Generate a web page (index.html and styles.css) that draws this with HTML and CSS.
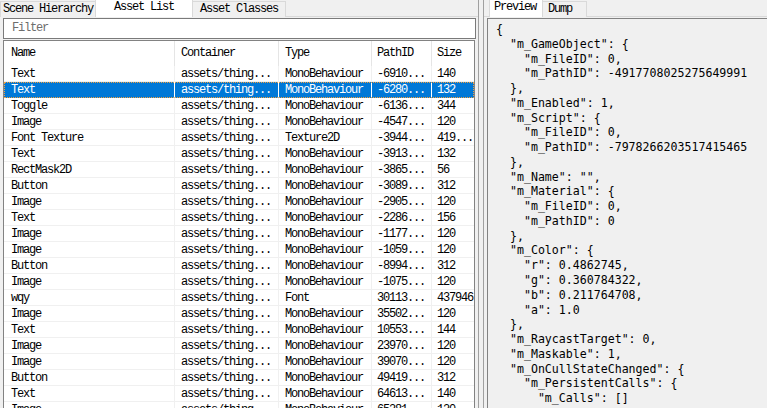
FILE: index.html
```html
<!DOCTYPE html>
<html>
<head>
<meta charset="utf-8">
<link rel="stylesheet" href="styles.css">
</head>
<body>
<div class="app">
  <div class="left">
    <div class="tabs">
      <div class="tab t1">Scene Hierarchy</div>
      <div class="tab t2 active">Asset List</div>
      <div class="tab t3">Asset Classes</div>
    </div>
    <div class="page">
      <div class="filter">Filter</div>
      <div class="list">
        <div class="row head">
          <div class="c c1">Name</div><div class="c c2">Container</div><div class="c c3">Type</div><div class="c c4">PathID</div><div class="c c5">Size</div>
        </div>
        <div class="row"><div class="c c1">Text</div><div class="c c2">assets/thing...</div><div class="c c3">MonoBehaviour</div><div class="c c4">-6910...</div><div class="c c5">140</div></div>
        <div class="row sel"><div class="c c1">Text</div><div class="c c2">assets/thing...</div><div class="c c3">MonoBehaviour</div><div class="c c4">-6280...</div><div class="c c5">132</div></div>
        <div class="row"><div class="c c1">Toggle</div><div class="c c2">assets/thing...</div><div class="c c3">MonoBehaviour</div><div class="c c4">-6136...</div><div class="c c5">344</div></div>
        <div class="row"><div class="c c1">Image</div><div class="c c2">assets/thing...</div><div class="c c3">MonoBehaviour</div><div class="c c4">-4547...</div><div class="c c5">120</div></div>
        <div class="row"><div class="c c1">Font Texture</div><div class="c c2">assets/thing...</div><div class="c c3">Texture2D</div><div class="c c4">-3944...</div><div class="c c5">419...</div></div>
        <div class="row"><div class="c c1">Text</div><div class="c c2">assets/thing...</div><div class="c c3">MonoBehaviour</div><div class="c c4">-3913...</div><div class="c c5">132</div></div>
        <div class="row"><div class="c c1">RectMask2D</div><div class="c c2">assets/thing...</div><div class="c c3">MonoBehaviour</div><div class="c c4">-3865...</div><div class="c c5">56</div></div>
        <div class="row"><div class="c c1">Button</div><div class="c c2">assets/thing...</div><div class="c c3">MonoBehaviour</div><div class="c c4">-3089...</div><div class="c c5">312</div></div>
        <div class="row"><div class="c c1">Image</div><div class="c c2">assets/thing...</div><div class="c c3">MonoBehaviour</div><div class="c c4">-2905...</div><div class="c c5">120</div></div>
        <div class="row"><div class="c c1">Text</div><div class="c c2">assets/thing...</div><div class="c c3">MonoBehaviour</div><div class="c c4">-2286...</div><div class="c c5">156</div></div>
        <div class="row"><div class="c c1">Image</div><div class="c c2">assets/thing...</div><div class="c c3">MonoBehaviour</div><div class="c c4">-1177...</div><div class="c c5">120</div></div>
        <div class="row"><div class="c c1">Image</div><div class="c c2">assets/thing...</div><div class="c c3">MonoBehaviour</div><div class="c c4">-1059...</div><div class="c c5">120</div></div>
        <div class="row"><div class="c c1">Button</div><div class="c c2">assets/thing...</div><div class="c c3">MonoBehaviour</div><div class="c c4">-8994...</div><div class="c c5">312</div></div>
        <div class="row"><div class="c c1">Image</div><div class="c c2">assets/thing...</div><div class="c c3">MonoBehaviour</div><div class="c c4">-1075...</div><div class="c c5">120</div></div>
        <div class="row"><div class="c c1">wqy</div><div class="c c2">assets/thing...</div><div class="c c3">Font</div><div class="c c4">30113...</div><div class="c c5">437946</div></div>
        <div class="row"><div class="c c1">Image</div><div class="c c2">assets/thing...</div><div class="c c3">MonoBehaviour</div><div class="c c4">35502...</div><div class="c c5">120</div></div>
        <div class="row"><div class="c c1">Text</div><div class="c c2">assets/thing...</div><div class="c c3">MonoBehaviour</div><div class="c c4">10553...</div><div class="c c5">144</div></div>
        <div class="row"><div class="c c1">Image</div><div class="c c2">assets/thing...</div><div class="c c3">MonoBehaviour</div><div class="c c4">23970...</div><div class="c c5">120</div></div>
        <div class="row"><div class="c c1">Image</div><div class="c c2">assets/thing...</div><div class="c c3">MonoBehaviour</div><div class="c c4">39070...</div><div class="c c5">120</div></div>
        <div class="row"><div class="c c1">Button</div><div class="c c2">assets/thing...</div><div class="c c3">MonoBehaviour</div><div class="c c4">49419...</div><div class="c c5">312</div></div>
        <div class="row"><div class="c c1">Text</div><div class="c c2">assets/thing...</div><div class="c c3">MonoBehaviour</div><div class="c c4">64613...</div><div class="c c5">140</div></div>
        <div class="row"><div class="c c1">Image</div><div class="c c2">assets/thing...</div><div class="c c3">MonoBehaviour</div><div class="c c4">65281...</div><div class="c c5">120</div></div>
      </div>
    </div>
  </div>
  <div class="splitter"></div>
  <div class="right">
    <div class="tabs rtabs">
      <div class="tab r1 active">Preview</div>
      <div class="tab r2">Dump</div>
    </div>
    <div class="preview">
<pre class="json">{
  "m_GameObject": {
    "m_FileID": 0,
    "m_PathID": -4917708025275649991
  },
  "m_Enabled": 1,
  "m_Script": {
    "m_FileID": 0,
    "m_PathID": -7978266203517415465
  },
  "m_Name": "",
  "m_Material": {
    "m_FileID": 0,
    "m_PathID": 0
  },
  "m_Color": {
    "r": 0.4862745,
    "g": 0.360784322,
    "b": 0.211764708,
    "a": 1.0
  },
  "m_RaycastTarget": 0,
  "m_Maskable": 1,
  "m_OnCullStateChanged": {
    "m_PersistentCalls": {
      "m_Calls": []
    }
  }
}</pre>
    </div>
  </div>
</div>
</body>
</html>
```

FILE: styles.css
```css
html, body {
  margin: 0;
  padding: 0;
  background: #f0f0f0;
}
body {
  width: 767px;
  height: 408px;
  overflow: hidden;
  font-family: "Liberation Mono", monospace;
  font-size: 12px;
  letter-spacing: -1.2px;
  color: #000;
}
.app {
  display: flex;
  height: 408px;
}
.left {
  width: 478px;
  flex: none;
  display: flex;
  flex-direction: column;
  border-right: 1px solid #a0a0a0;
  overflow: hidden;
}
.splitter {
  width: 4px;
  flex: none;
}
.right {
  flex: 1;
  display: flex;
  flex-direction: column;
  border-left: 1px solid #a0a0a0;
  overflow: hidden;
}
.tabs {
  display: flex;
  height: 17px;
  flex: none;
  align-items: flex-end;
  border-bottom: 1px solid #d9d9d9;
  box-sizing: border-box;
}
.tab {
  box-sizing: border-box;
  border: 1px solid #d9d9d9;
  border-bottom: none;
  background: #f0f0f0;
  text-align: center;
  white-space: nowrap;
  margin-bottom: -1px;
  height: 16px;
  line-height: 15px;
}
.tab.active {
  background: #fff;
  height: 18px;
  line-height: 14px;
  position: relative;
  z-index: 1;
}
.t1 { width: 96px; }
.t2 { width: 98px; margin-left: -1px; }
.t3 { width: 94px; margin-left: -1px; }
.page {
  flex: 1;
  display: flex;
  flex-direction: column;
  padding: 1px 2px 0 3px;
  min-height: 0;
}
.filter {
  height: 21px;
  box-sizing: border-box;
  border: 1px solid #7a7a7a;
  background: #fff;
  color: #6d6d6d;
  padding-left: 8px;
  line-height: 19px;
  flex: none;
}
.list {
  flex: 1;
  margin-top: 1px;
  border: 1px solid #828282;
  border-bottom: none;
  background: #fff;
  overflow: hidden;
  width: 472px;
  box-sizing: border-box;
}
.row {
  display: grid;
  grid-template-columns: 171px 104px 93px 60px 42px;
  height: 16px;
}
.row .c {
  box-sizing: border-box;
  border-right: 1px solid #f0f0f0;
  border-bottom: 1px solid #f0f0f0;
  padding-left: 6px;
  padding-top: 1px;
  line-height: 14px;
  white-space: nowrap;
  overflow: hidden;
}
.row .c1 { padding-left: 7px; }
.row .c5 { border-right: none; padding-left: 5px; }
.row .c4 { padding-left: 5px; }
.row.head {
  height: 25px;
}
.row.head .c {
  line-height: 25px;
  padding-top: 0;
  border-right: 1px solid #e5e5e5;
  border-bottom: none;
}
.row.head .c5 { border-right: none; }
.row.sel {
  background: #0078d7;
  color: #fff;
  outline: 1px dotted #f0a040;
  outline-offset: -1px;
}
.row.sel .c {
  border-right-color: #fff;
  border-bottom-color: #0078d7;
}
.rtabs {
  padding-left: 5px;
}
.r1 {
  width: 54px;
  text-align: left;
  padding-left: 4px;
}
.r2 {
  width: 45px;
  margin-left: -1px;
  text-align: left;
  padding-left: 5px;
}
.preview {
  flex: 1;
  margin: 1px 0 0 3px;
  border: 1px solid #828282;
  border-right: none;
  border-bottom: none;
  background: #f0f0f0;
  overflow: hidden;
  min-height: 0;
}
.json {
  margin: 0;
  padding: 3px 0 0 8px;
  font-family: "DejaVu Sans Mono", monospace;
  font-size: 11.6px;
  letter-spacing: 0;
  line-height: 14.76px;
  color: #000;
}
```
